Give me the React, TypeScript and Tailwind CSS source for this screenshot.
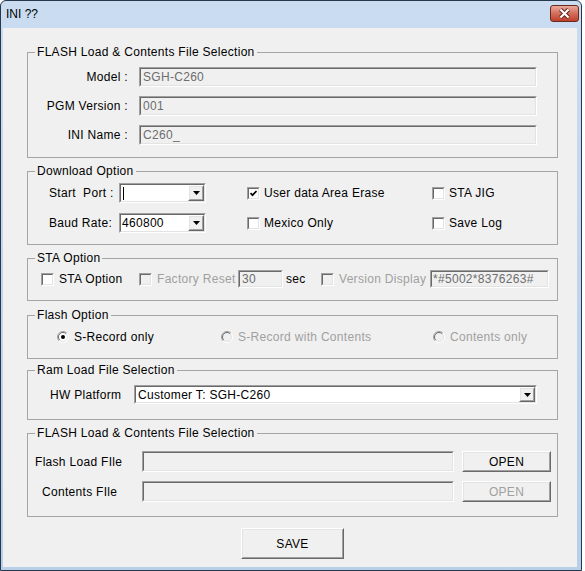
import type { ReactNode } from "react";

function Sunken({
  className = "",
  white = false,
  children,
}: {
  className?: string;
  white?: boolean;
  children?: ReactNode;
}) {
  return (
    <div
      className={`border border-t-[#a0a0a0] border-l-[#a0a0a0] border-b-white border-r-white ${className}`}
    >
      <div
        className={`flex h-full w-full items-center border border-t-[#696969] border-l-[#696969] border-b-[#e3e3e3] border-r-[#e3e3e3] ${
          white ? "bg-white" : "bg-[#f0f0f0]"
        }`}
      >
        {children}
      </div>
    </div>
  );
}

function Raised({
  className = "",
  children,
}: {
  className?: string;
  children?: ReactNode;
}) {
  return (
    <div
      className={`border border-t-white border-l-white border-b-[#696969] border-r-[#696969] ${className}`}
    >
      <div className="flex h-full w-full items-center justify-center border border-t-[#e3e3e3] border-l-[#e3e3e3] border-b-[#a0a0a0] border-r-[#a0a0a0] bg-[#f0f0f0]">
        {children}
      </div>
    </div>
  );
}

function Combo({ className = "", children }: { className?: string; children?: ReactNode }) {
  return (
    <Sunken white className={className}>
      <div className="flex h-full flex-1 items-center overflow-hidden pl-[1px]">{children}</div>
      <Raised className="h-full w-[16px] shrink-0">
        <svg width="7" height="4" viewBox="0 0 7 4">
          <polygon points="0,0 7,0 3.5,4" fill="#000" />
        </svg>
      </Raised>
    </Sunken>
  );
}

function Check({ checked = false, disabled = false }: { checked?: boolean; disabled?: boolean }) {
  return (
    <span className="inline-flex h-[13px] w-[13px] shrink-0 border border-t-[#a0a0a0] border-l-[#a0a0a0] border-b-white border-r-white">
      <span
        className={`flex h-full w-full items-center justify-center border border-t-[#696969] border-l-[#696969] border-b-[#e3e3e3] border-r-[#e3e3e3] ${
          disabled ? "bg-[#f0f0f0]" : "bg-white"
        }`}
      >
        {checked ? (
          <svg width="7" height="7" viewBox="0 0 7 7">
            <polyline points="0.5,3 2.5,5.2 6.5,1" fill="none" stroke="#000" strokeWidth="1.7" />
          </svg>
        ) : null}
      </span>
    </span>
  );
}

function Radio({ checked = false, disabled = false }: { checked?: boolean; disabled?: boolean }) {
  return (
    <svg width="12" height="12" viewBox="0 0 12 12" className="shrink-0">
      <circle cx="6" cy="6" r="5.5" fill={disabled ? "#f0f0f0" : "#fff"} />
      <path d="M2.1 9.9 A5.5 5.5 0 0 1 9.9 2.1" fill="none" stroke="#a0a0a0" />
      <path d="M2.8 9.2 A4.5 4.5 0 0 1 9.2 2.8" fill="none" stroke="#696969" />
      <path d="M9.9 2.1 A5.5 5.5 0 0 1 2.1 9.9" fill="none" stroke="#fff" />
      <path d="M9.2 2.8 A4.5 4.5 0 0 1 2.8 9.2" fill="none" stroke="#e3e3e3" />
      {checked ? <circle cx="6" cy="6" r="2" fill="#000" /> : null}
    </svg>
  );
}

function Group({
  title,
  className = "",
  children,
}: {
  title: string;
  className?: string;
  children?: ReactNode;
}) {
  return (
    <fieldset className={`w-[531px] border border-[#a5a5a5] px-0 ${className}`}>
      <legend className="ml-[7px] px-[2px] leading-[14px]">{title}</legend>
      {children}
    </fieldset>
  );
}

export default function App() {
  return (
    <div className="h-[571px] w-[585px] bg-white font-['Liberation_Sans',Arial,sans-serif] text-[12px] leading-[14px] tracking-[0.3px] text-black">
      <div className="flex h-[571px] w-[582px] flex-col rounded-t-[6px] border border-[#27384c] bg-gradient-to-b from-[#cadcf0] to-[#b7cfe9]">
        {/* title bar */}
        <div className="flex h-[27px] shrink-0 items-start justify-between pr-[2px]">
          <span className="mt-[6px] ml-[5px] tracking-normal">INI ??</span>
          <div className="mt-[4px] flex h-[17px] w-[29px] items-center justify-center rounded-[3px] border border-[#6a2a1f] bg-gradient-to-b from-[#e9a99c] via-[#d26e5c] to-[#c03f29]">
            <svg width="13" height="11" viewBox="0 0 13 11">
              <path d="M2.5 1.5 L10.5 9.5 M10.5 1.5 L2.5 9.5" stroke="#5b1e14" strokeWidth="4" />
              <path d="M2.5 1.5 L10.5 9.5 M10.5 1.5 L2.5 9.5" stroke="#fff" strokeWidth="2.2" />
            </svg>
          </div>
        </div>

        {/* client area */}
        <div className="mb-[3px] ml-[2px] mr-[4px] flex flex-1 flex-col bg-[#f0f0f0] pl-[24px]">
          <Group title="FLASH Load & Contents File Selection" className="mt-[17px] h-[113px]">
            <div className="flex flex-col gap-[9px] pt-[8px]">
              {[
                ["Model :", "SGH-C260"],
                ["PGM Version :", "001"],
                ["INI Name :", "C260_"],
              ].map(([label, value]) => (
                <div key={label} className="flex h-[20px] items-center">
                  <span className="w-[100px] text-right">{label}</span>
                  <Sunken className="ml-[11px] h-[20px] w-[398px]">
                    <span className="pl-[2px] text-[#6d6d6d]">{value}</span>
                  </Sunken>
                </div>
              ))}
            </div>
          </Group>

          <Group title="Download Option" className="mt-[6px] h-[81px]">
            <div className="flex flex-col gap-[10px] pt-[5px]">
              <div className="flex h-[20px] items-center">
                <span className="ml-[21px] w-[70px] whitespace-pre">Start  Port :</span>
                <Combo className="h-[20px] w-[87px]">
                  <span className="ml-[1px] h-[13px] w-[1px] bg-black" />
                </Combo>
                <label className="ml-[41px] flex w-[185px] items-center gap-[4px]">
                  <Check checked />
                  <span>User data Area Erase</span>
                </label>
                <label className="flex items-center gap-[4px]">
                  <Check />
                  <span>STA JIG</span>
                </label>
              </div>
              <div className="flex h-[20px] items-center">
                <span className="ml-[21px] w-[70px]">Baud Rate:</span>
                <Combo className="h-[20px] w-[87px]">
                  <span>460800</span>
                </Combo>
                <label className="ml-[41px] flex w-[185px] items-center gap-[4px]">
                  <Check />
                  <span>Mexico Only</span>
                </label>
                <label className="flex items-center gap-[4px]">
                  <Check />
                  <span>Save Log</span>
                </label>
              </div>
            </div>
          </Group>

          <Group title="STA Option" className="mt-[6px] h-[50px]">
            <div className="flex h-[18px] items-center pt-0 mt-[5px]">
              <label className="ml-[13px] flex w-[98px] items-center gap-[5px]">
                <Check />
                <span>STA Option</span>
              </label>
              <label className="flex w-[99px] items-center gap-[5px] text-[#a0a0a0]">
                <Check disabled />
                <span>Factory Reset</span>
              </label>
              <Sunken className="h-[18px] w-[45px]">
                <span className="pl-[2px] text-[#6d6d6d]">30</span>
              </Sunken>
              <span className="ml-[3px] w-[35px]">sec</span>
              <label className="flex w-[109px] items-center gap-[5px] text-[#a0a0a0]">
                <Check disabled />
                <span>Version Display</span>
              </label>
              <Sunken className="h-[18px] w-[119px]">
                <span className="pl-[1px] text-[#6d6d6d]">*#5002*8376263#</span>
              </Sunken>
            </div>
          </Group>

          <Group title="Flash Option" className="mt-[7px] h-[51px]">
            <div className="mt-[9px] flex h-[12px] items-center">
              <label className="ml-[29px] flex w-[164px] items-center gap-[5px]">
                <Radio checked />
                <span>S-Record only</span>
              </label>
              <label className="flex w-[212px] items-center gap-[5px] text-[#a0a0a0]">
                <Radio disabled />
                <span>S-Record with Contents</span>
              </label>
              <label className="flex items-center gap-[5px] text-[#a0a0a0]">
                <Radio disabled />
                <span>Contents only</span>
              </label>
            </div>
          </Group>

          <Group title="Ram Load File Selection" className="mt-[4px] h-[57px]">
            <div className="mt-[8px] flex h-[19px] items-center">
              <span className="ml-[22px] w-[84px]">HW Platform</span>
              <Combo className="h-[19px] w-[403px]">
                <span className="pl-[1px]">Customer T: SGH-C260</span>
              </Combo>
            </div>
          </Group>

          <Group title="FLASH Load & Contents File Selection" className="mt-[6px] h-[91px]">
            <div className="mt-[11px] flex flex-col gap-[9px]">
              <div className="flex h-[21px] items-center">
                <span className="ml-[7px] w-[107px]">Flash Load FIle</span>
                <Sunken className="h-[21px] w-[312px]" />
                <Raised className="ml-[8px] h-[21px] w-[89px]">
                  <span>OPEN</span>
                </Raised>
              </div>
              <div className="flex h-[21px] items-center">
                <span className="ml-[14px] w-[100px]">Contents FIle</span>
                <Sunken className="h-[21px] w-[312px]" />
                <Raised className="ml-[8px] h-[21px] w-[89px]">
                  <span className="text-[#a0a0a0]">OPEN</span>
                </Raised>
              </div>
            </div>
          </Group>

          <Raised className="ml-[214px] mt-[11px] h-[31px] w-[103px]">
            <span>SAVE</span>
          </Raised>
        </div>
      </div>
    </div>
  );
}
